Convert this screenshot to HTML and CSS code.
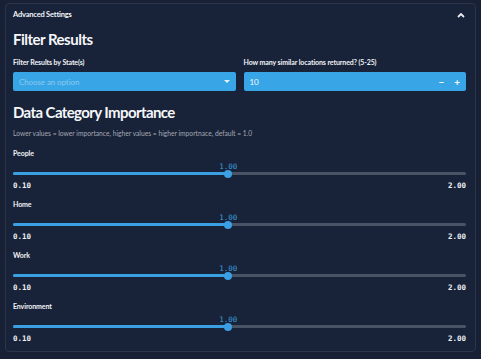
FILE: index.html
```html
<!DOCTYPE html>
<html>
<head>
<meta charset="utf-8">
<link rel="stylesheet" href="styles.css">
</head>
<body>
<div class="panel">
  <div class="summary">
    <span>Advanced Settings</span>
    <svg class="caret" width="8" height="6" viewBox="0 0 8 6"><path d="M1 5 L4 2 L7 5" fill="none" stroke="#e8ecf2" stroke-width="1.8"/></svg>
  </div>
  <div class="content">
    <h2 class="h-filter">Filter Results</h2>
    <div class="row">
      <div class="field">
        <div class="label">Filter Results by State(s)</div>
        <div class="box select"><span class="ph">Choose an option</span><svg width="6" height="4" viewBox="0 0 6 4"><path d="M0 0 L6 0 L3 3 Z" fill="#e8f2fa"/></svg></div>
      </div>
      <div class="field">
        <div class="label">How many similar locations returned? (5-25)</div>
        <div class="box number"><span class="val">10</span><span class="btns"><span>−</span><span>+</span></span></div>
      </div>
    </div>
    <h2 class="h-data">Data Category Importance</h2>
    <p class="note">Lower values = lower importance, higher values = higher importnace, default = 1.0</p>
    <div class="slider">
      <div class="label">People</div>
      <div class="track-wrap"><div class="cur" style="left:47.5%">1.00</div><div class="track"><div class="fill" style="width:47.5%"></div><div class="thumb" style="left:47.5%"></div></div></div>
      <div class="ends"><span>0.10</span><span>2.00</span></div>
    </div>
    <div class="slider">
      <div class="label">Home</div>
      <div class="track-wrap"><div class="cur" style="left:47.5%">1.00</div><div class="track"><div class="fill" style="width:47.5%"></div><div class="thumb" style="left:47.5%"></div></div></div>
      <div class="ends"><span>0.10</span><span>2.00</span></div>
    </div>
    <div class="slider">
      <div class="label">Work</div>
      <div class="track-wrap"><div class="cur" style="left:47.5%">1.00</div><div class="track"><div class="fill" style="width:47.5%"></div><div class="thumb" style="left:47.5%"></div></div></div>
      <div class="ends"><span>0.10</span><span>2.00</span></div>
    </div>
    <div class="slider">
      <div class="label">Environment</div>
      <div class="track-wrap"><div class="cur" style="left:47.5%">1.00</div><div class="track"><div class="fill" style="width:47.5%"></div><div class="thumb" style="left:47.5%"></div></div></div>
      <div class="ends"><span>0.10</span><span>2.00</span></div>
    </div>
  </div>
</div>
</body>
</html>
```
FILE: styles.css
```css
html, body { margin: 0; padding: 0; }
body {
  background: #172035;
  width: 481px;
  height: 359px;
  overflow: hidden;
  font-family: "Lato", "Open Sans", sans-serif;
  color: #f2f4f8;
  padding-top: 3px;
  box-sizing: border-box;
}
.panel {
  margin: 0 5px;
  height: 349px;
  border: 1px solid #2c3548;
  border-radius: 4px;
  box-sizing: border-box;
  background: #182238;
}
.summary {
  display: flex;
  justify-content: space-between;
  align-items: center;
  padding: 6px 10px 0 7px;
  height: 10px;
  line-height: 10px;
  font-size: 7.5px;
  font-weight: 700;
  letter-spacing: -0.2px;
}
.caret { margin-top: 0; }
.content { padding: 0 9px 0 7px; }
h2 {
  margin: 0;
  font-weight: 700;
  color: #f5f7fa;
}
.h-filter { font-size: 15px; letter-spacing: -0.5px; margin-top: 9px; line-height: 20px; }
.row { display: flex; gap: 8px; margin-top: 8px; }
.field { flex: 1; }
.label { font-size: 7px; font-weight: 700; line-height: 10px; color: #f0f2f6; letter-spacing: -0.1px; }
.box {
  margin-top: 5px;
  height: 19px;
  background: #38a6e6;
  border-radius: 2px;
  display: flex;
  align-items: center;
  justify-content: space-between;
  padding: 0 6px;
  font-size: 8px;
  letter-spacing: -0.1px;
  box-sizing: border-box;
}
.select { padding-right: 6px; }
.ph { color: #8cc9ee; }
.val { color: #f5f9fc; }
.btns { display: flex; gap: 10px; font-weight: 700; font-size: 10px; color: #f5f9fc; }
.h-data { font-size: 15px; letter-spacing: -0.6px; margin-top: 11px; line-height: 20px; }
.note { margin: 6px 0 0; font-size: 6.7px; color: #a3a9b4; line-height: 10px; }
.slider { margin-top: 10px; }
.slider + .slider { margin-top: 8px; }
.track-wrap { position: relative; height: 23px; }
.cur {
  position: absolute;
  top: 4px;
  line-height: 9px;
  transform: translateX(-50%);
  font-family: "DejaVu Sans Mono", monospace;
  font-size: 7.5px;
  color: #3b9edd;
}
.track {
  position: absolute;
  left: 0; right: 0;
  top: 14px;
  height: 3px;
  background: #4a5366;
  border-radius: 2px;
}
.fill { height: 3px; background: #3a9fe3; border-radius: 2px; }
.thumb {
  position: absolute;
  top: -2.5px;
  width: 8px; height: 8px;
  margin-left: -4px;
  border-radius: 50%;
  background: #3a9fe3;
}
.ends {
  display: flex;
  justify-content: space-between;
  font-family: "DejaVu Sans Mono", monospace;
  font-size: 7.5px;
  font-weight: 700;
  color: #eef1f5;
  line-height: 10px;
}
```
